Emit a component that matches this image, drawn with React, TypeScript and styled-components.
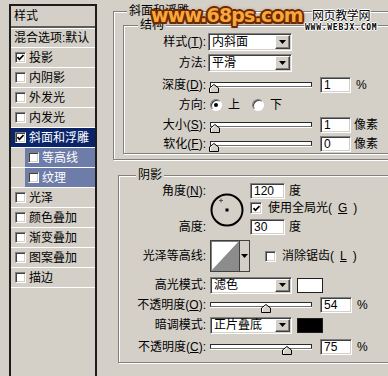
import React from 'react';
import styled, { createGlobalStyle } from 'styled-components';

const GlobalStyle = createGlobalStyle`
  html, body {
    margin: 0;
    padding: 0;
    background: #d4d0c8;
  }
  body {
    font-family: "Liberation Sans", "Noto Sans CJK SC", sans-serif;
    font-size: 12px;
    line-height: 14px;
    color: #000;
  }
`;

const Page = styled.div`
  position: relative;
  display: flex;
  align-items: flex-start;
  width: 388px;
  height: 376px;
  overflow: hidden;
  background: #d4d0c8;
`;

// ---- left: effect list ----
const StyleList = styled.div`
  flex-shrink: 0;
  width: 84px;
  height: 380px;
  margin: 4px 0 0 9px;
  border: 2px solid #1c1c1c;
`;

const ListHeader = styled.div`
  height: 20px;
  padding-left: 3px;
  display: flex;
  align-items: center;
  border-bottom: 2px solid #5c5c5c;
  box-shadow: 0 1px 0 #fff;
`;

const ListRow = styled.div<{ $selected?: boolean; $sub?: boolean }>`
  height: 19px;
  display: flex;
  border-bottom: 1px solid #fff;
  padding-left: ${p => (p.$sub ? 14 : 0)}px;
  background: ${p => (p.$selected ? '#0a246a' : 'transparent')};
  color: ${p => (p.$selected ? '#fff' : '#000')};
`;

const RowInner = styled.div<{ $sub?: boolean; $plain?: boolean }>`
  flex: 1;
  display: flex;
  align-items: center;
  gap: 3px;
  padding-left: ${p => (p.$plain || p.$sub ? 3 : 4)}px;
  background: ${p => (p.$sub ? '#6d7ca8' : 'transparent')};
  color: ${p => (p.$sub ? '#fff' : 'inherit')};
  white-space: nowrap;
`;

const Box = styled.span<{ $size?: number }>`
  flex-shrink: 0;
  box-sizing: border-box;
  width: ${p => p.$size ?? 11}px;
  height: ${p => p.$size ?? 11}px;
  display: inline-flex;
  align-items: center;
  justify-content: center;
  background: #fff;
  border: 1px solid;
  border-color: #808080 #fff #fff #808080;
  box-shadow: inset 1px 1px 0 #404040, inset -1px -1px 0 #d4d0c8;
`;

const CheckBox = ({ on, size }: { on?: boolean; size?: number }) => (
  <Box $size={size}>
    {on && (
      <svg width="7" height="7" viewBox="0 0 7 7">
        <path d="M0.5 3.2 L2.5 5.3 L6.5 1" stroke="#000" strokeWidth="1.7" fill="none" />
      </svg>
    )}
  </Box>
);

const effects = [
  { name: '投影', on: true },
  { name: '内阴影' },
  { name: '外发光' },
  { name: '内发光' },
  { name: '斜面和浮雕', on: true, selected: true },
  { name: '等高线', sub: true },
  { name: '纹理', sub: true },
  { name: '光泽' },
  { name: '颜色叠加' },
  { name: '渐变叠加' },
  { name: '图案叠加' },
  { name: '描边' },
];

// ---- right: settings ----
const Main = styled.div`
  flex-shrink: 0;
  width: 300px;
  margin-left: 16px;
  padding-top: 5px;
  display: flex;
  flex-direction: column;
`;

const Group = styled.fieldset<{ $pl?: number; $pb?: number; $mt?: number; $ml?: number }>`
  margin: ${p => p.$mt ?? 0}px 0 0 ${p => p.$ml ?? 0}px;
  padding: 0 0 ${p => p.$pb ?? 0}px ${p => p.$pl ?? 0}px;
  min-inline-size: 0;
  border: 1px solid #808080;
  box-shadow: inset 1px 1px 0 #fff, 1px 1px 0 #fff;
`;

const Caption = styled.legend<{ $x: number }>`
  margin-left: ${p => p.$x}px;
  padding: 0 2px;
  line-height: 13px;
  background: #d4d0c8;
`;

const FormRow = styled.div<{ $h: number; $mt?: number }>`
  display: flex;
  align-items: center;
  height: ${p => p.$h}px;
  margin-top: ${p => p.$mt ?? 0}px;
  white-space: nowrap;
`;

const Label = styled.span<{ $w: number }>`
  flex-shrink: 0;
  width: ${p => p.$w}px;
  text-align: right;
`;

const Key = styled.u`
  text-underline-offset: 1px;
`;

const SelectBox = styled.div<{ $w: number; $h?: number; $ml?: number }>`
  box-sizing: border-box;
  flex-shrink: 0;
  display: flex;
  align-items: stretch;
  width: ${p => p.$w}px;
  height: ${p => p.$h ?? 18}px;
  margin-left: ${p => p.$ml ?? 0}px;
  background: #fff;
  border: 1px solid;
  border-color: #808080 #fff #fff #808080;
  box-shadow: inset 1px 1px 0 #404040, inset -1px -1px 0 #d4d0c8;
`;

const SelectText = styled.span`
  flex: 1;
  display: flex;
  align-items: center;
  padding-left: 3px;
`;

const DropButton = styled.span`
  box-sizing: border-box;
  width: 15px;
  margin: 1px 1px 1px 0;
  display: flex;
  align-items: center;
  justify-content: center;
  background: #d4d0c8;
  border: 1px solid;
  border-color: #fff #404040 #404040 #fff;
  box-shadow: inset -1px -1px 0 #808080;
`;

const Arrow = () => (
  <svg width="7" height="4" viewBox="0 0 7 4">
    <path d="M0 0 H7 L3.5 4 Z" fill="#000" />
  </svg>
);

const Select = ({ value, w, h, ml }: { value: string; w: number; h?: number; ml?: number }) => (
  <SelectBox $w={w} $h={h} $ml={ml}>
    <SelectText>{value}</SelectText>
    <DropButton>
      <Arrow />
    </DropButton>
  </SelectBox>
);

const SliderBox = styled.div<{ $ml: number }>`
  position: relative;
  flex-shrink: 0;
  width: 102px;
  height: 14px;
  margin-left: ${p => p.$ml}px;
`;

const Track = styled.div`
  box-sizing: border-box;
  margin-top: 4px;
  height: 5px;
  background: #fff;
  border: 1px solid #2a2a2a;
  border-bottom-color: #707070;
  box-shadow: 0 1px 0 #fff;
`;

const Thumb = styled.svg`
  position: absolute;
  top: 6px;
`;

const Slider = ({ frac, ml }: { frac: number; ml: number }) => (
  <SliderBox $ml={ml}>
    <Track />
    <Thumb width="10" height="9" viewBox="0 0 10 9" style={{ left: Math.round(frac * 97) - 1 }}>
      <path d="M0.5 4 L5 0.5 L9.5 4 V8.5 H0.5 Z" fill="#d4d0c8" stroke="#000" />
      <path d="M1.5 8 V4.5 L5 1.8" stroke="#fff" fill="none" />
    </Thumb>
  </SliderBox>
);

const NumberBox = styled.span<{ $w: number; $ml: number }>`
  box-sizing: border-box;
  flex-shrink: 0;
  width: ${p => p.$w}px;
  height: 16px;
  margin-left: ${p => p.$ml}px;
  padding-left: 3px;
  display: flex;
  align-items: center;
  background: #fff;
  border: 1px solid;
  border-color: #808080 #fff #fff #808080;
  box-shadow: inset 1px 1px 0 #404040, inset -1px -1px 0 #d4d0c8;
`;

const Unit = styled.span<{ $ml: number }>`
  margin-left: ${p => p.$ml}px;
`;

const RadioOption = styled.span<{ $ml: number }>`
  display: flex;
  align-items: center;
  gap: 6px;
  margin-left: ${p => p.$ml}px;
`;

const RadioDot = styled.span<{ $on?: boolean }>`
  box-sizing: border-box;
  width: 12px;
  height: 12px;
  border-radius: 50%;
  display: inline-flex;
  align-items: center;
  justify-content: center;
  background: #fff;
  border: 1px solid;
  border-color: #808080 #fff #fff #808080;
  box-shadow: inset 1px 1px 0 #404040;
  &::after {
    content: '';
    width: 4px;
    height: 4px;
    border-radius: 50%;
    background: ${p => (p.$on ? '#000' : 'transparent')};
  }
`;

const AngleGrid = styled.div`
  display: grid;
  grid-template-columns: 87px 42px auto;
  grid-template-rows: 17px 18px 20px;
  align-items: center;
  white-space: nowrap;
`;

const GridLabel = styled.span<{ $row: number }>`
  grid-column: 1;
  grid-row: ${p => p.$row};
  text-align: right;
`;

const Dial = styled.svg`
  grid-column: 2;
  grid-row: 1 / 4;
  justify-self: center;
`;

const GridCell = styled.div<{ $row: number }>`
  grid-column: 3;
  grid-row: ${p => p.$row};
  display: flex;
  align-items: center;
  padding-left: 2px;
`;

const CheckLabel = styled.span<{ $ml?: number }>`
  display: flex;
  align-items: center;
  gap: 6px;
  margin-left: ${p => p.$ml ?? 0}px;
`;

const ContourPicker = styled.div`
  box-sizing: border-box;
  flex-shrink: 0;
  display: flex;
  width: 40px;
  height: 32px;
  margin-left: 4px;
  border: 1px solid #404040;
  box-shadow: inset 1px 1px 0 #808080;
  background: #fff;
`;

const ContourArrow = styled.span`
  box-sizing: border-box;
  width: 10px;
  display: flex;
  align-items: center;
  justify-content: center;
  background: #d4d0c8;
  border-left: 1px solid #404040;
`;

const Swatch = styled.span<{ $color: string }>`
  box-sizing: border-box;
  flex-shrink: 0;
  width: 26px;
  height: 15px;
  margin-left: 5px;
  background: ${p => p.$color};
  border: 1px solid #202020;
`;

// ---- watermarks laid over the screenshot ----
const SiteMark = styled.div`
  position: absolute;
  left: 151px;
  top: 3px;
  font-family: "DejaVu Sans", sans-serif;
  font-weight: bold;
  font-size: 19px;
  line-height: 24px;
  letter-spacing: -0.8px;
  color: #f7a83c;
  text-shadow:
    -2px 0 #6e2800, 2px 0 #6e2800, 0 -2px #6e2800, 0 2px #6e2800,
    -1.5px -1.5px #6e2800, 1.5px -1.5px #6e2800, 1.5px 1.5px #6e2800, -1.5px 1.5px #6e2800,
    0 0 4px #8a3a00;
`;

const BrandMark = styled.div`
  position: absolute;
  left: 312px;
  top: 8px;
  font-family: "Noto Sans CJK SC", sans-serif;
  font-size: 12px;
  line-height: 14px;
  letter-spacing: -0.4px;
  color: #000;
  text-shadow: -1px 0 #fff, 1px 0 #fff, 0 -1px #fff, 0 1px #fff;
`;

const BrandSub = styled.div`
  position: absolute;
  left: 305px;
  top: 23px;
  font-family: "DejaVu Sans Mono", monospace;
  font-weight: bold;
  font-size: 8px;
  line-height: 9px;
  letter-spacing: 0.75px;
  color: #000;
  text-shadow: -1px 0 #fff, 1px 0 #fff, 0 -1px #fff, 0 1px #fff;
`;

export default function App() {
  return (
    <>
      <GlobalStyle />
      <Page>
        <StyleList>
          <ListHeader>样式</ListHeader>
          <ListRow>
            <RowInner $plain>混合选项:默认</RowInner>
          </ListRow>
          {effects.map(e => (
            <ListRow key={e.name} $selected={e.selected} $sub={e.sub}>
              <RowInner $sub={e.sub}>
                <CheckBox on={e.on} />
                {e.name}
              </RowInner>
            </ListRow>
          ))}
        </StyleList>

        <Main>
          <Group $pl={9} $pb={5}>
            <Caption $x={4}>斜面和浮雕</Caption>
            <Group $mt={1}>
              <Caption $x={14}>结构</Caption>
              <FormRow $h={20}>
                <Label $w={82}>样式(<Key>T</Key>):</Label>
                <Select value="内斜面" w={84} ml={2} />
              </FormRow>
              <FormRow $h={22}>
                <Label $w={82}>方法:</Label>
                <Select value="平滑" w={84} ml={2} />
              </FormRow>
              <FormRow $h={21}>
                <Label $w={82}>深度(<Key>D</Key>):</Label>
                <Slider frac={0} ml={4} />
                <NumberBox $w={31} $ml={8}>1</NumberBox>
                <Unit $ml={5}>%</Unit>
              </FormRow>
              <FormRow $h={20}>
                <Label $w={82}>方向:</Label>
                <RadioOption $ml={4}>
                  <RadioDot $on />上
                </RadioOption>
                <RadioOption $ml={12}>
                  <RadioDot />下
                </RadioOption>
              </FormRow>
              <FormRow $h={19}>
                <Label $w={82}>大小(<Key>S</Key>):</Label>
                <Slider frac={0.01} ml={4} />
                <NumberBox $w={31} $ml={8}>1</NumberBox>
                <Unit $ml={3}>像素</Unit>
              </FormRow>
              <FormRow $h={19}>
                <Label $w={82}>软化(<Key>F</Key>):</Label>
                <Slider frac={0} ml={4} />
                <NumberBox $w={31} $ml={8}>0</NumberBox>
                <Unit $ml={3}>像素</Unit>
              </FormRow>
            </Group>
          </Group>

          <Group $mt={9} $ml={5} $pb={6}>
            <Caption $x={17}>阴影</Caption>
            <AngleGrid>
              <GridLabel $row={1}>角度(<Key>N</Key>):</GridLabel>
              <Dial width="34" height="34" viewBox="0 0 34 34">
                <circle cx="17" cy="17" r="15.5" stroke="#000" strokeWidth="2" fill="none" />
                <rect x="15.5" y="15.5" width="3" height="3" fill="#000" />
                <path d="M9 7.5 H13 M11 5.5 V9.5" stroke="#555" strokeWidth="1" />
              </Dial>
              <GridCell $row={1}>
                <NumberBox $w={35} $ml={0}>120</NumberBox>
                <Unit $ml={4}>度</Unit>
              </GridCell>
              <GridCell $row={2}>
                <CheckLabel>
                  <CheckBox on size={12} />
                  使用全局光(<Key>G</Key>)
                </CheckLabel>
              </GridCell>
              <GridLabel $row={3}>高度:</GridLabel>
              <GridCell $row={3}>
                <NumberBox $w={35} $ml={0}>30</NumberBox>
                <Unit $ml={4}>度</Unit>
              </GridCell>
            </AngleGrid>

            <FormRow $h={34} $mt={2}>
              <Label $w={87}>光泽等高线:</Label>
              <ContourPicker>
                <svg width="28" height="30" viewBox="0 0 28 30">
                  <path d="M0 30 L28 0 V30 Z" fill="#8c8c8c" />
                </svg>
                <ContourArrow>
                  <Arrow />
                </ContourArrow>
              </ContourPicker>
              <CheckLabel $ml={15}>
                <CheckBox />
                消除锯齿(<Key>L</Key>)
              </CheckLabel>
            </FormRow>

            <FormRow $h={18} $mt={3}>
              <Label $w={87}>高光模式:</Label>
              <Select value="滤色" w={82} h={17} ml={4} />
              <Swatch $color="#fff" />
            </FormRow>
            <FormRow $h={18} $mt={2}>
              <Label $w={87}>不透明度(<Key>O</Key>):</Label>
              <Slider frac={0.54} ml={4} />
              <NumberBox $w={32} $ml={8}>54</NumberBox>
              <Unit $ml={5}>%</Unit>
            </FormRow>
            <FormRow $h={18} $mt={2}>
              <Label $w={87}>暗调模式:</Label>
              <Select value="正片叠底" w={82} h={17} ml={4} />
              <Swatch $color="#000" />
            </FormRow>
            <FormRow $h={18} $mt={4}>
              <Label $w={87}>不透明度(<Key>C</Key>):</Label>
              <Slider frac={0.75} ml={4} />
              <NumberBox $w={32} $ml={8}>75</NumberBox>
              <Unit $ml={5}>%</Unit>
            </FormRow>
          </Group>
        </Main>

        <SiteMark>www.68ps.com</SiteMark>
        <BrandMark>网页教学网</BrandMark>
        <BrandSub>WWW.WEBJX.COM</BrandSub>
      </Page>
    </>
  );
}
